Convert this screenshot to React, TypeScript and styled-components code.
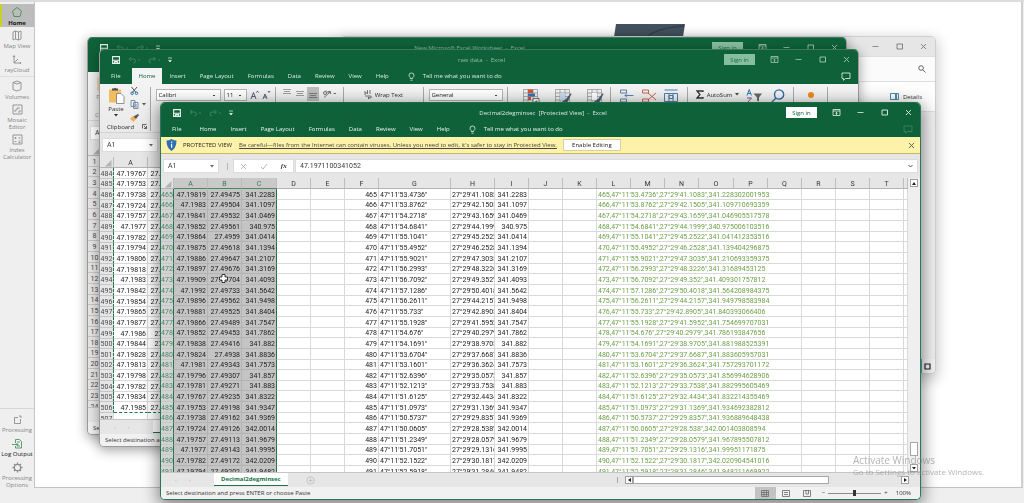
import React from "react";
import styled, { createGlobalStyle, css } from "styled-components";

const ui = `"Open Sans", "Noto Sans", sans-serif`;
const cellFont = `Roboto, "Noto Sans", sans-serif`;
const green = "#0f6139";

const GlobalStyle = createGlobalStyle`
  * { box-sizing: border-box; }
  body { margin: 0; background: #efefef; font-family: ${ui}; font-size: 6px; line-height: 8px; color: #2b2b2b; }
  button, input, select { font: inherit; color: inherit; margin: 0; padding: 0; border: 0; background: none; border-radius: 0; }
  a { color: inherit; }
  svg { display: block; flex: none; }
`;

/* ---------- desktop ---------- */
const Page = styled.div`
  position: relative;
  min-height: 100vh;
  display: flex;
  border-top: 2px solid #dcdcdc;
  overflow: hidden;
`;
const Sidebar = styled.nav`
  width: 34px;
  flex: none;
  display: flex;
  flex-direction: column;
  justify-content: space-between;
  padding: 2px 0 14px;
  background: #efefef;
`;
const SideGroup = styled.div<{ $top?: boolean }>`
  display: flex;
  flex-direction: column;
  gap: 1px;
  padding-top: ${(p) => (p.$top ? 3 : 0)}px;
  border-top: ${(p) => (p.$top ? "1px solid #d6d6d6" : "0")};
`;
const SideItem = styled.button<{ $active?: boolean; $strong?: boolean }>`
  display: flex;
  flex-direction: column;
  align-items: center;
  gap: 2px;
  padding: 2px 0 0;
  min-height: 23px;
  line-height: 7px;
  color: ${(p) => (p.$active || p.$strong ? "#151515" : "#858585")};
  font-weight: ${(p) => (p.$active ? 700 : 400)};
  background: ${(p) => (p.$active ? "#bcbcbc" : "none")};
  box-shadow: ${(p) => (p.$active ? "inset 2px 0 0 #c6d12b" : "none")};
  svg { color: ${(p) => (p.$active || p.$strong ? "#4f9262" : "#8d8d8d")}; }
`;
const SideRule = styled.hr`
  margin: 0;
  width: 100%;
  border: 0;
  border-top: 1px solid #dedede;
`;
const Main = styled.main`
  flex: 1;
  display: flex;
  flex-direction: column;
  margin: 0 1px 15px 0;
  border: 1px solid #c3c3c3;
  border-top: 0;
  border-right: 2px solid #cfcfcf;
  background: #fff;
`;
const Logo = styled.svg`
  position: absolute;
  left: 614px;
  top: 22px;
`;
const Win = styled.section<{ $left: number; $right: number; $top: number; $active?: boolean }>`
  position: absolute;
  left: ${(p) => p.$left}px;
  right: ${(p) => p.$right}px;
  top: ${(p) => p.$top - 2}px;
  display: flex;
  flex-direction: column;
  overflow: hidden;
  border: 1px solid ${(p) => (p.$active ? "#2c7657" : "#9b9b9b")};
  border-top-color: ${(p) => (p.$active ? "#1d6d45" : "#3b7a5a")};
  border-radius: 5px;
  background: #e6e6e6;
  box-shadow: ${(p) =>
    p.$active ? "0 4px 16px 2px rgba(0,0,0,0.45)" : "0 3px 12px 1px rgba(0,0,0,0.32)"};
`;

/* ---------- file explorer ---------- */
const Explorer = styled(Win)`
  border-color: #cfcfcf;
  background: #efefef;
  box-shadow: 0 4px 14px 2px rgba(0, 0, 0, 0.2);
`;
const ExBar = styled.div<{ $h: number; $bg: string; $gap: number; $pad: number }>`
  height: ${(p) => p.$h}px;
  flex: none;
  display: flex;
  align-items: center;
  justify-content: flex-end;
  gap: ${(p) => p.$gap}px;
  padding-right: ${(p) => p.$pad}px;
  background: ${(p) => p.$bg};
  border-bottom: 1px solid #dedede;
  color: #777;
`;
const DetailsButton = styled.button`
  display: flex;
  align-items: center;
  gap: 4px;
  color: #333;
`;
const ExBody = styled.div`
  height: 247px;
`;
const ExFoot = styled.div`
  height: 14px;
  display: flex;
  align-items: center;
  justify-content: flex-end;
  padding-right: 4px;
  background: linear-gradient(270deg, #f4f4f4 0 13px, #58a9b8 13px);
`;

/* ---------- excel chrome ---------- */
const Header = styled.header<{ $dim: boolean }>`
  background: ${green};
  color: ${(p) => (p.$dim ? "#dcebe2" : "#e8f3ec")};
`;
const TitleRow = styled.div`
  display: grid;
  grid-template-columns: 1fr auto 1fr;
  align-items: center;
  height: 18px;
  padding: 1px 7px 0 12px;
`;
const Title = styled.h1<{ $dim: boolean }>`
  margin: 0;
  font-size: 6px;
  font-weight: 400;
  white-space: pre;
  color: ${(p) => (p.$dim ? "#93bda6" : "#dbeae1")};
`;
const Quick = styled.div`
  display: flex;
  align-items: center;
  gap: 8px;
`;
const Controls = styled.div<{ $dim: boolean }>`
  display: flex;
  align-items: center;
  justify-content: flex-end;
  gap: 15px;
  color: ${(p) => (p.$dim ? "#a3c8b3" : "#e6f1ea")};
`;
const SignIn = styled.button<{ $dim: boolean }>`
  width: 31px;
  height: 11px;
  text-align: center;
  color: ${(p) => (p.$dim ? "#1c6a44" : green)};
  background: ${(p) => (p.$dim ? "#86bf9f" : "#fff")};
`;
const IconButton = styled.button`
  display: flex;
  align-items: center;
  justify-content: center;
`;
const Tabs = styled.div`
  display: flex;
  height: 16px;
  align-items: stretch;
  padding-right: 7px;
`;
const Tab = styled.button<{ $active?: boolean; $file?: boolean }>`
  padding: ${(p) => (p.$file ? "0 11px" : "0 7px")};
  background: ${(p) => (p.$active ? "#f3f3f3" : "none")};
  color: ${(p) => (p.$active ? green : "inherit")};
`;
const TellMe = styled.button`
  display: flex;
  align-items: center;
  gap: 8px;
  margin: 0 auto 0 12px;
`;

const Banner = styled.div`
  display: flex;
  align-items: center;
  height: 17px;
  padding: 0 5px;
  background: #fdf2a9;
  border-bottom: 1px solid #c9b968;
  color: #444;
`;
const BannerLabel = styled.strong`
  font-weight: 400;
  margin: 0 7px 0 6px;
  color: #222;
`;
const EnableButton = styled.button`
  width: 58px;
  height: 12px;
  margin: 0 auto 0 6px;
  background: #fff;
  border: 1px solid #d8cf9a;
  color: #222;
`;

/* ---------- ribbon ---------- */
const Ribbon = styled.div<{ $faded: boolean }>`
  display: flex;
  height: 49px;
  padding-top: 3px;
  background: linear-gradient(#f3f3f3, #e9e9e9);
  border-bottom: 1px solid #d3d3d3;
  > * { opacity: ${(p) => (p.$faded ? 0.5 : 1)}; }
`;
const Group = styled.div<{ $w: number; $gap?: number; $end?: boolean }>`
  width: ${(p) => p.$w}px;
  flex: none;
  display: flex;
  align-items: flex-start;
  justify-content: ${(p) => (p.$end ? "flex-end" : "center")};
  gap: ${(p) => p.$gap ?? 6}px;
  padding: 2px ${(p) => (p.$end ? 6 : 0)}px 0 0;
  border-right: 1px solid #a9a9a9;
  height: 42px;
`;
const Clipboard = styled.div`
  width: 51px;
  flex: none;
  height: 44px;
  display: grid;
  grid-template-columns: 28px 1fr;
  grid-template-rows: 1fr 9px;
  padding-left: 2px;
  border-right: 1px solid #a9a9a9;
`;
const PasteButton = styled.button`
  display: flex;
  flex-direction: column;
  align-items: center;
  gap: 1px;
`;
const SmallStack = styled.div`
  display: flex;
  flex-direction: column;
  align-items: flex-start;
  gap: 4px;
`;
const GroupLabel = styled.div`
  grid-column: 1 / 3;
  display: flex;
  align-items: center;
  justify-content: space-between;
  padding: 0 3px 0 5px;
`;
const Combo = styled.select<{ $w: number }>`
  appearance: none;
  width: ${(p) => p.$w}px;
  height: 12px;
  padding-left: 2px;
  border: 1px solid #b5b5b5;
  color: #222;
  background: linear-gradient(#444, #444) no-repeat right 5px center / 2px 1px, #fff;
`;
const Toggled = styled.span`
  padding: 2px;
  margin: -2px;
  background: #bdbdbd;
`;
const RibbonButton = styled.button`
  display: flex;
  align-items: center;
  gap: 3px;
  height: 11px;
`;

/* ---------- formula bar ---------- */
const FormulaBar = styled.div`
  display: flex;
  align-items: center;
  height: 24px;
  padding: 0 3px;
  font-family: ${cellFont};
  font-size: 7px;
  color: #3a3a3a;
`;
const Box = styled.div<{ $grow?: boolean }>`
  display: flex;
  align-items: center;
  height: 12px;
  width: ${(p) => (p.$grow ? "auto" : "54px")};
  flex: ${(p) => (p.$grow ? "1" : "none")};
  padding: 0 4px;
  background: #fff;
  box-shadow: 0 0 0 1px #dcdcdc;
  input { flex: 1; min-width: 0; width: 20px; }
`;
const Grip = styled.span`
  width: 16px;
  height: 8px;
  background: linear-gradient(#b5b5b5, #b5b5b5) no-repeat 9px center / 1px 7px;
`;
const Fx = styled.div`
  display: flex;
  align-items: center;
  justify-content: space-around;
  width: 59px;
  height: 12px;
  margin-right: 3px;
  background: #fff;
  box-shadow: 0 0 0 1px #dcdcdc;
  i { font-family: "Liberation Serif", serif; font-weight: 700; color: #333; }
`;

/* ---------- sheet ---------- */
const SheetArea = styled.div<{ $h: number }>`
  display: flex;
  height: ${(p) => p.$h}px;
  overflow: hidden;
`;
const Sheet = styled.table<{ $h: number }>`
  flex: 1;
  width: 0;
  height: ${(p) => p.$h}px;
  table-layout: fixed;
  border-spacing: 0;
  background: #fff;
  font-family: ${cellFont};
  font-size: 7px;
  color: #1a1a1a;
  th, td {
    padding: 0 1px;
    overflow: hidden;
    white-space: nowrap;
    font-weight: 400;
    vertical-align: bottom;
    border-right: 1px solid #d9d9d9;
    border-bottom: 1px solid #d9d9d9;
  }
`;
const HeadCell = styled.th<{ $sel?: boolean }>`
  height: 11px;
  text-align: center;
  background: ${(p) => (p.$sel ? "#c9c9c9" : "#e6e6e6")};
  color: ${(p) => (p.$sel ? "#3d7457" : "#333")};
  && { border-right-color: #bdbdbd; border-bottom-color: ${(p) => (p.$sel ? "#4c8567" : "#b4b4b4")}; }
`;
const RowHead = styled.th<{ $sel?: boolean; $marked?: boolean }>`
  text-align: center;
  background: ${(p) => (p.$sel ? "#d3d3d3" : "#e6e6e6")};
  color: ${(p) => (p.$sel ? "#4b8667" : "#4a4a4a")};
  && {
    padding: 0;
    border-bottom-color: #c6c6c6;
    ${(p) => p.$sel && css`border-right-color: #21734a;`}
    ${(p) => p.$marked && css`border-right: 1px dashed #21734a;`}
  }
`;
const Cell = styled.td<{ $kind: "num" | "text" | "long"; $sel?: boolean; $edge?: boolean; $open?: boolean; $last?: boolean }>`
  text-align: ${(p) => (p.$kind === "num" ? "right" : "left")};
  color: ${(p) => (p.$kind === "long" ? "#6aa046" : "inherit")};
  background: ${(p) => (p.$sel ? "#c4c4c4" : "none")};
  && {
    ${(p) => p.$kind === "long" && css`overflow: visible;`}
    ${(p) => p.$sel && css`border-color: #b3b3b3;`}
    ${(p) => p.$edge && css`border-right-color: #21734a;`}
    ${(p) => p.$open && css`border-right-color: transparent;`}
    ${(p) => p.$last && css`border-bottom: 1px dashed #21734a;`}
  }
`;
const VScroll = styled.div`
  width: 12px;
  flex: none;
  display: flex;
  flex-direction: column;
  align-items: center;
  padding: 1px 0 0;
  background: #efefef;
`;
const ScrollButton = styled.button`
  width: 8px;
  height: 8px;
  flex: none;
  display: flex;
  align-items: center;
  justify-content: center;
  background: #fff;
  border: 1px solid #9f9f9f;
`;
const VThumb = styled.div`
  width: 8px;
  height: 14px;
  margin: auto 0 8px;
  background: #fff;
  border: 1px solid #a6a6a6;
`;
const SheetTabs = styled.div`
  display: flex;
  align-items: center;
  height: 15px;
  padding: 0 11px 0 14px;
  border-top: 1px solid #c4c4c4;
  background: #e6e6e6;
`;
const Arrows = styled.span`
  display: flex;
  gap: 12px;
  width: 39px;
  color: #b5b5b5;
`;
const SheetTab = styled.button`
  align-self: stretch;
  margin-bottom: 1px;
  padding: 0 7px;
  font-weight: 700;
  color: #21734a;
  background: #fff;
  border-bottom: 1px solid #21734a;
`;
const AddSheet = styled.button`
  margin: 0 auto 0 18px;
`;
const HScroll = styled.div`
  width: 292px;
  display: flex;
  align-items: center;
  padding-left: 8px;
  background: linear-gradient(#a5a5a5, #a5a5a5) no-repeat left center / 1px 6px;
`;
const HThumb = styled.div`
  width: 196px;
  height: 8px;
  margin-right: auto;
  background: #fff;
  border: 1px solid #a6a6a6;
`;
const StatusBar = styled.footer`
  display: flex;
  align-items: center;
  height: 12px;
  padding: 0 9px 0 5px;
  background: #f1f1f1;
  color: #333;
`;
const Views = styled.div`
  display: flex;
  margin-left: auto;
  margin-right: 4px;
`;
const View = styled.button<{ $on?: boolean }>`
  width: 21px;
  height: 12px;
  display: flex;
  align-items: center;
  justify-content: center;
  background: ${(p) => (p.$on ? "#c3c3c3" : "none")};
  color: #666;
`;
const Zoom = styled.label`
  display: flex;
  align-items: center;
  gap: 3px;
  input {
    appearance: none;
    width: 53px;
    height: 8px;
    background: linear-gradient(#8c8c8c, #8c8c8c) no-repeat center / 100% 1px;
  }
  input::-webkit-slider-thumb {
    appearance: none;
    width: 3px;
    height: 6px;
    background: #333;
  }
`;
const ZoomValue = styled.span`
  margin-left: 5px;
`;

/* ---------- overlays ---------- */
const Pointer = styled.svg`
  position: absolute;
  left: 219px;
  top: 272px;
`;
const Watermark = styled.aside`
  position: absolute;
  left: 853px;
  bottom: 26px;
  color: rgba(130, 130, 130, 0.6);
  font-size: 8px;
  line-height: 10px;
  white-space: nowrap;
  pointer-events: none;
`;
const WatermarkTitle = styled.div`
  font-size: 10px;
  line-height: 14px;
`;

/* ---------- icons ---------- */
type IcoProps = { d: string; w?: number; h?: number; c?: string; sw?: number; fill?: string };
const Ico = ({ d, w = 9, h = 9, c = "currentColor", sw = 1, fill = "none" }: IcoProps) => (
  <svg width={w} height={h} viewBox={`0 0 ${w} ${h}`} fill={fill} stroke={c} strokeWidth={sw} aria-hidden="true">
    <path d={d} />
  </svg>
);
const Caret = ({ c = "currentColor" }: { c?: string }) => (
  <svg width="4" height="3" viewBox="0 0 4 3" fill={c} aria-hidden="true"><path d="M0 0h4L2 2.6z" /></svg>
);
const Save = () => (
  <svg width="8" height="8" viewBox="0 0 8 8" fill="none" stroke="#e8f3ec" aria-hidden="true">
    <path d="M.6.6h6.8v6.8H.6zM1 4.2h6M2.6 7.4V5.6h2.8v1.8" strokeWidth="1.1" />
  </svg>
);
const Undo = ({ flip }: { flip?: boolean }) => (
  <svg width="12" height="8" viewBox="0 0 12 8" fill="none" stroke="#3f8562" aria-hidden="true">
    {flip ? <path d="M7.4 3H3Q1 3 1 5t2 2M5.4 1l2 2-2 2" /> : <path d="M1 3h4.4q2 0 2 2t-2 2M3 1L1 3l2 2" />}
    <path d="M10 4h2" />
  </svg>
);
const Customize = () => <Ico w={4} h={6} d="M0 1h4M.6 3.4h2.8L2 5z" fill="currentColor" sw={0.7} />;
const Sheetlet = ({ accent, brush }: { accent: string; brush?: boolean }) => (
  <svg width="17" height="17" viewBox="0 0 17 17" fill="none" aria-hidden="true">
    <path d="M.5.5h14v13H.5zM.5 4h14M.5 7.5h14M.5 11h14M5 .5v13M10 .5v13" stroke="#9a9a9a" strokeWidth=".8" />
    {brush ? (
      <>
        <path d="M5 4h5v7H5z" fill={accent} />
        <path d="M16 4l-5 6-3 2 1.500 2 3-1 4-8z" fill="#4a5d6e" />
        <path d="M8 11.500l3 2-2 3-4-1z" fill="#2e75b6" />
      </>
    ) : (
      <>
        <path d="M5 .5h5V4H5zM5 8h3v3H5z" fill={accent} />
        <path d="M5 4.500h7v3H5z" fill="#2e75b6" />
        <path d="M10 9.500h6v7h-6z" fill="#fff" stroke="#777" />
        <path d="M11.500 13h3M12 14.500l2-3" stroke="#555" />
      </>
    )}
  </svg>
);

/* ---------- data ---------- */
type Rec = [number, string, string, string, string, string, string];
const records: Rec[] = [
  [465, "47.19819", "27.49475", "341.2283", "53.4736", "41.1083", "341.228302001953"],
  [466, "47.1983", "27.49504", "341.1097", "53.8762", "42.1505", "341.109710693359"],
  [467, "47.19841", "27.49532", "341.0469", "54.2718", "43.1659", "341.046905517578"],
  [468, "47.19852", "27.49561", "340.975", "54.6841", "44.1999", "340.975006103516"],
  [469, "47.19864", "27.4959", "341.0414", "55.1041", "45.2522", "341.041412353516"],
  [470, "47.19875", "27.49618", "341.1394", "55.4952", "46.2528", "341.139404296875"],
  [471, "47.19886", "27.49647", "341.2107", "55.9021", "47.3035", "341.210693359375"],
  [472, "47.19897", "27.49676", "341.3169", "56.2993", "48.3226", "341.31689453125"],
  [473, "47.19909", "27.49704", "341.4093", "56.7092", "49.352", "341.409301757812"],
  [474, "47.1992", "27.49733", "341.5642", "57.1286", "50.4018", "341.564208984375"],
  [475, "47.19896", "27.49562", "341.9498", "56.2611", "44.2157", "341.949798583984"],
  [476, "47.19881", "27.49525", "341.8404", "55.733", "42.8905", "341.840393066406"],
  [477, "47.19866", "27.49489", "341.7547", "55.1928", "41.5952", "341.754699707031"],
  [478, "47.19852", "27.49453", "341.7862", "54.676", "40.2979", "341.786193847656"],
  [479, "47.19838", "27.49416", "341.882", "54.1691", "38.9705", "341.881988525391"],
  [480, "47.19824", "27.4938", "341.8836", "53.6704", "37.6687", "341.883605957031"],
  [481, "47.1981", "27.49343", "341.7573", "53.1601", "36.3624", "341.757293701172"],
  [482, "47.19796", "27.49307", "341.857", "52.6396", "35.0573", "341.856994628906"],
  [483, "47.19781", "27.49271", "341.883", "52.1213", "33.7538", "341.882995605469"],
  [484, "47.19767", "27.49235", "341.8322", "51.6125", "32.4434", "341.832214355469"],
  [485, "47.19753", "27.49198", "341.9347", "51.0973", "31.1369", "341.934692382812"],
  [486, "47.19738", "27.49162", "341.9369", "50.5737", "29.8357", "341.936889648438"],
  [487, "47.19724", "27.49126", "342.0014", "50.0605", "28.538", "342.001403808594"],
  [488, "47.19757", "27.49113", "341.9679", "51.2349", "28.0579", "341.967895507812"],
  [489, "47.1977", "27.49143", "341.9995", "51.7051", "29.1316", "341.99951171875"],
  [490, "47.19782", "27.49172", "342.0209", "52.1522", "30.1817", "342.020904541016"],
  [491, "47.19794", "27.49202", "341.9482", "52.5918", "31.2846", "341.948211669922"],
];
const rawRows: [string, string][] = [
  ["47.19767", "27.49235"], ["47.19753", "27.49198"], ["47.19738", "27.49162"], ["47.19724", "27.49126"],
  ["47.19757", "27.49113"], ["47.1977", "27.49143"], ["47.19782", "27.49172"], ["47.19794", "27.49202"],
  ["47.19806", "27.49231"], ["47.19818", "27.49261"], ["47.1983", "27.49291"], ["47.19842", "27.49321"],
  ["47.19854", "27.49351"], ["47.19865", "27.49381"], ["47.19877", "27.49411"], ["47.1986", "27.4937"],
  ["47.19844", "27.4933"], ["47.19828", "27.49293"], ["47.19813", "27.49256"], ["47.19798", "27.49219"],
  ["47.19782", "27.49182"], ["47.19834", "27.49218"], ["47.1985", "27.49255"],
];
const letters = "ABCDEFGHIJKLMNOPQRST".split("");
const widths = [34, 34, 35, 34, 34, 34, 72, 44, 34, 34, 34, 34, 34, 34, 35, 34, 34, 34, 34, 34];

/* ---------- parts ---------- */
const WindowButtons = () => (
  <>
    <IconButton aria-label="Minimize"><Ico d="M1.500 4.500h6" sw={0.8} /></IconButton>
    <IconButton aria-label="Maximize"><Ico d="M2 2h5.500v5H2z" sw={0.9} /></IconButton>
    <IconButton aria-label="Close"><Ico d="M2 2l5 5M7 2L2 7" sw={0.9} /></IconButton>
  </>
);

const tabNames = ["Insert", "Page Layout", "Formulas", "Data", "Review", "View", "Help"];

function ExcelHeader({ title, dim, homeActive }: { title: string; dim: boolean; homeActive: boolean }) {
  return (
    <Header $dim={dim}>
      <TitleRow>
        <Quick>
          <IconButton aria-label="Save"><Save /></IconButton>
          <IconButton aria-label="Undo"><Undo /></IconButton>
          <IconButton aria-label="Redo"><Undo flip /></IconButton>
          <IconButton aria-label="Customize toolbar"><Customize /></IconButton>
        </Quick>
        <Title $dim={dim}>{title}</Title>
        <Controls $dim={dim}>
          <SignIn $dim={dim}>Sign in</SignIn>
          <IconButton aria-label="Ribbon display options"><Ico d="M1 1.500h7v6H1zM1 3h7M4.500 7V4.500M3.300 5.500l1.200-1.200 1.200 1.200" sw={0.8} /></IconButton>
          <WindowButtons />
        </Controls>
      </TitleRow>
      <Tabs>
        <Tab $file>File</Tab>
        <Tab $active={homeActive}>Home</Tab>
        {tabNames.map((t) => <Tab key={t}>{t}</Tab>)}
        <TellMe>
          <Ico w={7} h={9} d="M2.300 6.500V5.600Q1 4.700 1 3.300 1 1 3.500 1T6 3.300Q6 4.700 4.700 5.600v.9zM2.500 8.200h2" sw={0.8} />
          Tell me what you want to do
        </TellMe>
        <IconButton aria-label="Comments">
          <Ico w={10} h={9} d="M1 1h8v5.500H4.500L2.500 8.300V6.500H1z" sw={0.9} c={dim ? "#d5e8dc" : "#3f8562"} />
        </IconButton>
      </Tabs>
    </Header>
  );
}

function ExcelRibbon({ faded }: { faded: boolean }) {
  return (
    <Ribbon $faded={faded}>
      <Clipboard>
        <PasteButton>
          <svg width="17" height="17" viewBox="0 0 17 17" aria-hidden="true">
            <path d="M1 2.500h12v13H1z" fill="#f0bd62" />
            <path d="M4 3.500V1.500h2Q7 0 8 1.500h2v2z" fill="#4d4d4d" />
            <path d="M8.500 6.500h4.500l3 3v7H8.500z" fill="#fff" stroke="#777" strokeWidth=".8" />
          </svg>
          Paste
          <Caret />
        </PasteButton>
        <SmallStack>
          <svg width="9" height="8" viewBox="0 0 9 8" fill="none" aria-hidden="true">
            <path d="M1.500 0l4.500 5.500M7 0L2.500 5.500" stroke="#555" />
            <path d="M.8 6.200a1.300 1.300 0 1 0 2.600 0 1.300 1.300 0 1 0-2.600 0M5.200 6.200a1.300 1.300 0 1 0 2.600 0 1.300 1.300 0 1 0-2.600 0" stroke="#2e75b6" />
          </svg>
          <RibbonButton aria-label="Copy">
            <Ico d="M1 .5h4v6H1zM3.500 2.500h4.500v6h-4.500zM4.500 5h2.500M4.500 7h2.500" c="#5d7a94" sw={0.8} />
            <Caret c="#555" />
          </RibbonButton>
          <svg width="9" height="8" viewBox="0 0 9 8" aria-hidden="true">
            <path d="M0 4.500l3-2.500 3 3-2.500 3z" fill="#f0b050" /><path d="M3.500 2.500L8 0l1 1-3 4z" fill="#555" />
          </svg>
        </SmallStack>
        <GroupLabel>Clipboard<Ico w={5} h={5} d="M.5 4.500v-4h4M2 2l2.500 2.500M4.500 2v2.500H2" sw={0.7} /></GroupLabel>
      </Clipboard>
      <Group $w={125} $gap={3}>
        <Combo $w={65} aria-label="Font"><option>Calibri</option></Combo>
        <Combo $w={23} aria-label="Font size"><option>11</option></Combo>
        <RibbonButton aria-label="Grow font"><Ico w={9} h={10} d="M1 9l2.500-6.500L6 9M2 6.500h3M6.500 2.500l1-1.500 1 1.500" c="#3b556b" sw={0.9} /></RibbonButton>
        <RibbonButton aria-label="Shrink font"><Ico w={9} h={10} d="M1 9l2-5 2 5M2 7h2.500M6 1l1 1.500L8 1" c="#3b556b" sw={0.9} /></RibbonButton>
      </Group>
      <Group $w={68} $gap={5}>
        <Ico w={8} h={8} d="M0 .5h8M1 2.500h6M0 4.500h8" c="#8b8b8b" sw={0.8} />
        <Ico w={8} h={8} d="M0 2.500h8M1 4.500h6M0 6.500h8" c="#8b8b8b" sw={0.8} />
        <Toggled><Ico w={8} h={10} d="M0 4.500h8M1 6.500h6M0 8.500h8" c="#6b6b6b" sw={0.8} /></Toggled>
        <Ico w={14} h={9} d="M2 8.500L8 3M1.500 4a1.500 1.500 0 1 0 3 0 1.500 1.500 0 1 0-3 0M4 1.500l3 3M6 2.500h2.500V5M11.500 4.500h2.500" c="#666" sw={0.9} />
      </Group>
      <Group $w={80}>
        <RibbonButton>
          <Ico w={8} h={9} d="M1 1v4M3.500 0v4M1 3h2M6 0v4M1 6h5q1.500 0 1.500 1T6 8H4M5 6.800L4 8l1 1" c="#555" sw={0.8} />
          Wrap Text
        </RibbonButton>
      </Group>
      <Group $w={84}>
        <Combo $w={74} aria-label="Number format"><option>General</option></Combo>
      </Group>
      <Group $w={103} $gap={15} $end>
        <Sheetlet accent="#d9532f" /><Sheetlet accent="#c7dcef" brush /><Sheetlet accent="#fff" brush />
      </Group>
      <Group $w={77} $gap={8}>
        <Ico w={14} h={14} d="M.5 1h6v3h-6zM.5 10h6v3h-6zM5 6.500h8.500M5 6.500l2-2M5 6.500l2 2" c="#5c83a8" />
        <Ico w={14} h={14} d="M.5 1h6v3h-6zM.5 10h6v3h-6zM6 4l8 7M14 4l-8 7" c="#c76550" />
        <Ico w={14} h={14} d="M.5 1h13M.5 4.500h13v8H.5zM5 4.500v8M9 4.500v8M5 6.500h4v3H5z" c="#4d7eae" />
      </Group>
      <Group $w={106} $gap={7}>
        <SmallStack>
          <RibbonButton><Ico w={8} h={9} d="M7 2V1H1l3 3.500L1 8h6V7" sw={1.3} c="#333" />AutoSum<Caret c="#444" /></RibbonButton>
          <RibbonButton><Ico w={8} h={9} d="M.5 1h7v6h-7zM.5 2h7" c="#555" />Fill</RibbonButton>
        </SmallStack>
        <svg width="17" height="15" viewBox="0 0 17 15" fill="none" aria-hidden="true">
          <path d="M1 6.500l2.200-6 2.200 6M1.800 4.500h3" stroke="#2e75b6" />
          <path d="M1 9h4.500L1 14h4.500" stroke="#7f4fa0" />
          <path d="M7.500 4.500h8.500l-3 4v4l-2-1v-3z" fill="#666" />
        </svg>
        <Ico w={15} h={15} d="M4.500 5.500a4.600 4.600 0 1 0 9.200 0 4.600 4.600 0 1 0-9.200 0M6 9L1 14" c="#2e6ca4" sw={1.4} />
      </Group>
      <Group $w={34}>
        <svg width="8" height="12" viewBox="0 0 8 12" aria-hidden="true"><circle cx="4" cy="6" r="3" fill="#f28a17" /></svg>
      </Group>
    </Ribbon>
  );
}

function ExcelFormula({ value }: { value: string }) {
  return (
    <FormulaBar>
      <Box><input aria-label="Name box" defaultValue="A1" /><Caret c="#666" /></Box>
      <Grip />
      <Fx>
        <Ico w={7} h={7} d="M1 1l5 5M6 1L1 6" c="#b0b0b0" sw={0.9} />
        <Ico w={8} h={7} d="M1 4l2 2 4-5" c="#b0b0b0" sw={0.9} />
        <i>fx</i>
      </Fx>
      <Box $grow><input aria-label="Formula" defaultValue={value} /><Ico w={5} h={4} d="M.5 1l2 2 2-2" c="#555" /></Box>
    </FormulaBar>
  );
}

const CornerMark = styled.svg`
  margin-left: auto;
`;
const Corner = () => (
  <HeadCell><CornerMark width="8" height="8" viewBox="0 0 8 8" fill="#b3b3b3"><path d="M7.500 1v6.500H1z" /></CornerMark></HeadCell>
);

function PlainBook({ left, right, top, title, raw }: { left: number; right: number; top: number; title: string; raw: boolean }) {
  const rows = raw ? rawRows.map((r, i) => ({ n: 484 + i, a: r[0], b: r[1] })) : Array.from({ length: 23 }, (_, i) => ({ n: i + 1, a: "", b: "" }));
  return (
    <Win $left={left} $right={right} $top={top} aria-label={title}>
      <ExcelHeader title={`${title}  -  Excel`} dim homeActive />
      <ExcelRibbon faded={!raw} />
      <ExcelFormula value="" />
      <SheetArea $h={262}>
        <Sheet $h={267}>
          <colgroup><col width={14} /><col width={34} /><col width={34} /><col /></colgroup>
          <thead><tr><Corner /><HeadCell>A</HeadCell><HeadCell>B</HeadCell><HeadCell /></tr></thead>
          <tbody>
            {rows.map((r, i) => (
              <tr key={r.n}>
                <RowHead $marked={raw}>{r.n}</RowHead>
                <Cell $kind="num" $last={raw && i === 22}>{r.a}</Cell>
                <Cell $kind="num" $last={raw && i === 22}>{r.b}</Cell>
                <Cell $kind="num" />
              </tr>
            ))}
            <tr><RowHead>{raw ? 507 : 24}</RowHead><Cell $kind="num" /><Cell $kind="num" /><Cell $kind="num" /></tr>
          </tbody>
        </Sheet>
      </SheetArea>
      <SheetTabs><Arrows><span>‹</span><span>›</span></Arrows><SheetTab>Sheet1</SheetTab></SheetTabs>
      <StatusBar>Select destination and press ENTER or choose Paste</StatusBar>
    </Win>
  );
}

function DataRow({ rec }: { rec: Rec }) {
  const [n, a, b, c, g, h, l] = rec;
  const lat = `47°11'${g}"`;
  const lon = `27°29'${h}"`;
  const joined = `${n},${lat},${lon},${l}`;
  return (
    <tr>
      <RowHead $sel>{n}</RowHead>
      <Cell $kind="num" $sel>{a}</Cell>
      <Cell $kind="num" $sel>{b}</Cell>
      <Cell $kind="num" $sel $edge>{c}</Cell>
      <Cell $kind="num" />
      <Cell $kind="num" />
      <Cell $kind="num">{n}</Cell>
      <Cell $kind="text">{lat}</Cell>
      <Cell $kind="text">{lon}</Cell>
      <Cell $kind="num">{c}</Cell>
      <Cell $kind="num" />
      <Cell $kind="num" />
      <Cell $kind="long" colSpan={5} $open={joined.length > 48}>{joined}</Cell>
      {[0, 1, 2, 3, 4].map((k) => <Cell key={k} $kind="num" />)}
    </tr>
  );
}

function ProtectedBook() {
  return (
    <Win $left={160} $right={103} $top={102} $active aria-label="Decimal2degminsec">
      <ExcelHeader title="Decimal2degminsec  [Protected View]  -  Excel" dim={false} homeActive={false} />
      <Banner>
        <svg width="11" height="12" viewBox="0 0 11 12" aria-hidden="true">
          <path d="M5.500 0Q8 1.500 10.500 1.500 10.500 9 5.500 12 .5 9 .5 1.500 3 1.500 5.500 0z" fill="#2f6fb3" />
          <path d="M5 2.500h1.200v1.300H5zM5 4.800h1.200v4H5z" fill="#fff" />
        </svg>
        <BannerLabel>PROTECTED VIEW</BannerLabel>
        <a href="#protected-view">Be careful—files from the Internet can contain viruses. Unless you need to edit, it's safer to stay in Protected View.</a>
        <EnableButton>Enable Editing</EnableButton>
        <IconButton aria-label="Close message"><Ico w={7} h={7} d="M1 1l5 5M6 1L1 6" c="#555" sw={0.9} /></IconButton>
      </Banner>
      <ExcelFormula value="47.1971100341052" />
      <SheetArea $h={294}>
        <Sheet $h={299}>
          <colgroup><col width={13} />{widths.map((w, i) => <col key={i} width={w} />)}<col /></colgroup>
          <thead>
            <tr><Corner />{letters.map((l, i) => <HeadCell key={l} $sel={i < 3}>{l}</HeadCell>)}<HeadCell /></tr>
          </thead>
          <tbody>{records.map((r) => <DataRow key={r[0]} rec={r} />)}</tbody>
        </Sheet>
        <VScroll>
          <ScrollButton aria-label="Scroll up"><Ico w={4} h={3} d="M0 3l2-3 2 3z" fill="#222" c="none" /></ScrollButton>
          <VThumb />
          <ScrollButton aria-label="Scroll down"><Caret c="#222" /></ScrollButton>
        </VScroll>
      </SheetArea>
      <SheetTabs>
        <Arrows><span>‹</span><span>›</span></Arrows>
        <SheetTab>Decimal2degminsec</SheetTab>
        <AddSheet aria-label="New sheet"><Ico d="M.8 4.500a3.700 3.700 0 1 0 7.400 0 3.700 3.700 0 1 0-7.400 0M4.500 2.500v4M2.500 4.500h4" c="#bdbdbd" sw={0.8} /></AddSheet>
        <HScroll>
          <ScrollButton aria-label="Scroll left"><Ico w={3} h={4} d="M3 0L0 2l3 2z" fill="#222" c="none" /></ScrollButton>
          <HThumb />
          <ScrollButton aria-label="Scroll right"><Ico w={3} h={4} d="M0 0l3 2-3 2z" fill="#222" c="none" /></ScrollButton>
        </HScroll>
      </SheetTabs>
      <StatusBar>
        Select destination and press ENTER or choose Paste
        <Views>
          <View $on aria-label="Normal view"><Ico w={8} h={7} d="M.5.5h7v6h-7zM.5 2.500h7M.5 4.500h7M3 .5v6M5.500 .5v6" sw={0.7} /></View>
          <View aria-label="Page layout"><Ico w={8} h={7} d="M.5.5h7v6h-7zM2 2.500h4M2 4.500h4" sw={0.8} /></View>
          <View aria-label="Page break preview"><Ico w={8} h={7} d="M.5.5h7v6h-7zM3 .5v3.500h2.500V.5" sw={0.8} /></View>
        </Views>
        <Zoom>−<input type="range" aria-label="Zoom" defaultValue={50} />+<ZoomValue>100%</ZoomValue></Zoom>
      </StatusBar>
    </Win>
  );
}

export default function App() {
  return (
    <Page>
      <GlobalStyle />
      <Sidebar>
        <SideGroup>
          <SideItem $active><Ico w={12} h={12} d="M6 1.500L10.500 5 9 10.500H3L1.500 5z" />Home</SideItem>
          <SideItem><Ico w={10} h={11} d="M1 2l2.500-1 3 1L9 1v8l-2.500 1-3-1L1 10zM3.500 1v8M6.500 2v8" sw={0.9} />Map View</SideItem>
          <SideItem><Ico w={10} h={11} d="M2 2v7h7M2 9l4-4M1 3l1-1.500L3 3M8 8l1 1-1 1" sw={0.9} />rayCloud</SideItem>
          <SideRule />
          <SideItem><Ico w={10} h={12} d="M1 2.500q4-3 8 0v7q-4 3-8 0zM1 2.500q4 3 8 0" sw={0.9} />Volumes</SideItem>
          <SideItem><Ico w={11} h={11} d="M1 1h9v9H1zM3 8V6h2V4h3M8 6v2H6" sw={0.9} />Mosaic<br />Editor</SideItem>
          <SideItem><Ico w={11} h={11} d="M1 1h9v9H1zM2.500 4h2M3.500 3v2M6.500 4h2M2.500 7.500h2M6.500 7h2M6.500 8.500h2" sw={0.9} />Index<br />Calculator</SideItem>
        </SideGroup>
        <SideGroup $top>
          <SideItem><Ico w={9} h={11} d="M1.500 3.500H5M7.500 5v4.500h-6v-6M6 2h2v2" sw={0.9} />Processing</SideItem>
          <SideItem $strong><Ico w={10} h={11} d="M3.500 5V1.500h4l2 2v6.500h-6V8M5 4h3M5 8h3M0 6.500h6M4.500 5L6 6.500 4.500 8" sw={0.9} />Log Output</SideItem>
          <SideItem><Ico w={11} h={11} d="M5.500 .5v2M5.500 8.500v2M.5 5.500h2M8.500 5.500h2M2 2l1.400 1.400M7.600 7.600L9 9M9 2L7.600 3.400M3.400 7.600L2 9M2.300 5.500a3.200 3.200 0 1 0 6.400 0 3.200 3.200 0 1 0-6.400 0" sw={1.3} />Processing<br />Options</SideItem>
        </SideGroup>
      </Sidebar>
      <Main />

      <Logo width="72" height="13" viewBox="0 0 72 13" aria-hidden="true">
        <path d="M2 0h69l-2 13H0z" fill="#44525f" />
        <path d="M34 12Q44 4 70 2" stroke="#31404e" strokeWidth="1.500" fill="none" />
      </Logo>

      <Explorer $left={340} $right={88} $top={36} aria-label="File Explorer">
        <ExBar $h={20} $bg="#e6e6e6" $gap={15} $pad={7}><WindowButtons /></ExBar>
        <ExBar $h={25} $bg="#fbfbfb" $gap={0} $pad={9}>
          <Ico w={8} h={8} d="M.8 3a2.300 2.300 0 1 0 4.600 0 2.300 2.300 0 1 0-4.600 0M4.800 4.800L7.500 7.500" c="#555" sw={0.9} />
        </ExBar>
        <ExBar $h={30} $bg="#fdfdfd" $gap={0} $pad={13}>
          <DetailsButton>
            <Ico w={9} h={7} d="M.5.5h8v6h-8zM5.500.5v6M6.500 1v5" c="#4d8aa5" />
            Details
          </DetailsButton>
        </ExBar>
        <ExBody />
        <ExFoot><Ico w={7} h={7} d="M1 1h5v5H1z" c="#222" sw={1.2} /></ExFoot>
      </Explorer>

      <PlainBook left={87} right={177} top={37} title="New Microsoft Excel Worksheet" raw={false} />
      <PlainBook left={99} right={165} top={49} title="raw data" raw />
      <ProtectedBook />

      <Pointer width="9" height="9" viewBox="0 0 9 9" aria-hidden="true">
        <path d="M3 .5h3V3h2.500v3H6v2.500H3V6H.5V3H3z" fill="#fff" stroke="#111" strokeWidth=".8" />
      </Pointer>
      <Watermark>
        <WatermarkTitle>Activate Windows</WatermarkTitle>
        Go to Settings to activate Windows.
      </Watermark>
    </Page>
  );
}
